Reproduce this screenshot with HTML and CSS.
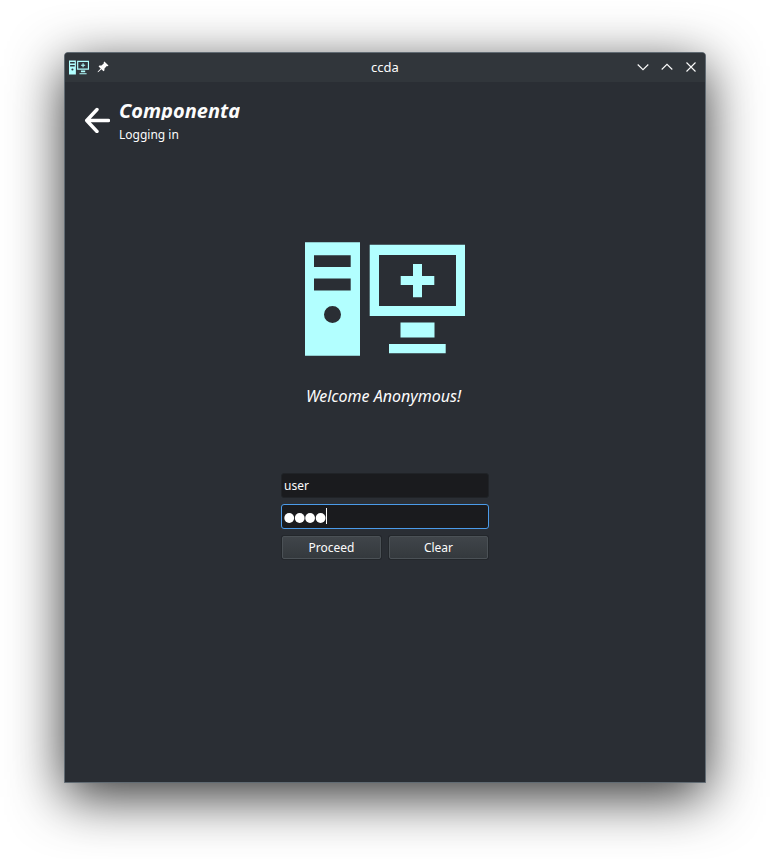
FILE: index.html
```html
<!DOCTYPE html>
<html lang="en">
<head>
<meta charset="utf-8">
<title>ccda</title>
<link rel="stylesheet" href="styles.css">
</head>
<body>
<svg class="defs" aria-hidden="true">
  <symbol id="logo" viewBox="0 0 160 114">
    <path fill="currentColor" fill-rule="evenodd" d="M0 .3H55V113.7H0ZM9 13.3V25H45.7V13.3ZM9 36.5V48.4H45.7V36.5ZM19 72.5a8.5 8.5 0 1 0 17 0a8.5 8.5 0 1 0-17 0ZM64.7 2.8H160V74H64.7ZM74 13V64H151V13ZM108 22h9v12h12.3v9H117v12.3h-9V43H95.700v-9H108ZM95.500 80.500h34v15H95.500ZM84 102h56.700v9.300H84Z"/>
  </symbol>
</svg>
<div class="window">
  <header class="titlebar">
    <div class="left">
      <svg class="app-icon"><use href="#logo"/></svg>
      <svg class="pin" viewBox="0 0 12 12"><path fill="#fcfcfc" d="M7.400 .4 11.500 4.500 10.600 5.200 9.800 5.100 7.500 7.500 7.400 9.500 6.500 10.300 4.400 8.200 1.400 11.100 .7 11.300 .8 10.500 3.700 7.500 1.600 5.400 2.400 4.600 4.500 4.500 6.900 2.200 6.700 1.200Z"/></svg>
    </div>
    <div class="title">ccda</div>
    <div class="controls">
      <svg viewBox="0 0 12 12"><path d="M.7 3.500 6 8.700 11.300 3.500"/></svg>
      <svg viewBox="0 0 12 12"><path d="M.7 8.500 6 3.300 11.300 8.500"/></svg>
      <svg viewBox="0 0 12 12"><path d="M1.500 1.500 10.500 10.500M10.500 1.500 1.500 10.500"/></svg>
    </div>
  </header>
  <div class="heading">
    <svg class="back" viewBox="0 0 26 26"><path d="M13 2.500 2.700 13.500 13 24.500M3 13.500H24.500"/></svg>
    <div>
      <h1>Componenta</h1>
      <p>Logging in</p>
    </div>
  </div>
  <main>
    <svg class="logo"><use href="#logo"/></svg>
    <p class="welcome">Welcome Anonymous!</p>
    <form class="login">
      <div class="field">user</div>
      <div class="field focused">
        <svg class="dots" viewBox="0 0 42 10"><circle cx="5.200" cy="5" r="4.900"/><circle cx="15.700" cy="5" r="4.900"/><circle cx="26.100" cy="5" r="4.900"/><circle cx="36.600" cy="5" r="4.900"/></svg>
        <i class="caret"></i>
      </div>
      <div class="actions">
        <button type="button">Proceed</button>
        <button type="button">Clear</button>
      </div>
    </form>
  </main>
</div>
</body>
</html>
```
FILE: styles.css
```css
* { box-sizing: border-box; }
body {
  margin: 0;
  height: 859px;
  padding: 52px 64px 0;
  overflow: hidden;
  background: #fff;
  color: #fcfcfc;
  font: 12px/17px "Noto Sans", sans-serif;
}
h1, p { margin: 0; }
svg { display: block; }
.defs { position: absolute; width: 0; height: 0; }
.window {
  width: 642px;
  height: 731px;
  border: 1px solid #616b73;
  border-radius: 4px 4px 0 0;
  background: #2a2e34;
  box-shadow: 0 14px 54px rgba(0, 0, 0, .8);
}
.titlebar {
  display: grid;
  grid-template-columns: 1fr auto 1fr;
  align-items: center;
  height: 29px;
  padding: 0 8px 0 4px;
  border-radius: 3px 3px 0 0;
  background: #31363b;
}
.left { display: flex; align-items: center; gap: 8px; }
.app-icon { width: 20px; height: 15px; margin-top: -1px; color: #b2ffff; }
.pin { width: 12px; height: 12px; margin-top: -2px; }
.title { font-size: 13px; padding-left: 4px; }
.controls { display: flex; justify-content: flex-end; gap: 12px; margin-top: -1px; }
.controls svg { width: 12px; height: 12px; fill: none; stroke: #fcfcfc; stroke-width: 1.1; }
.heading { display: flex; height: 160px; padding: 15px 0 0 19px; gap: 9px; }
.back { width: 26px; height: 26px; margin-top: 10px; fill: none; stroke: #fff; stroke-width: 3.400; stroke-linecap: round; stroke-linejoin: round; }
h1 { height: 23px; overflow: hidden; font-size: 20px; line-height: 27px; font-style: italic; font-weight: 700; }
.heading p { margin-top: 6px; }
main { display: flex; flex-direction: column; align-items: center; }
.logo { width: 160px; height: 114px; color: #b2ffff; }
.welcome { margin-top: 28px; padding-right: 3px; font-size: 16px; line-height: 24px; font-style: italic; }
.login { display: flex; flex-direction: column; gap: 6px; width: 208px; margin-top: 65px; }
.field {
  display: flex;
  align-items: center;
  height: 25px;
  padding: 0 2px;
  border: 1px solid #202327;
  border-radius: 3px;
  background: #1a1b1e;
}
.focused { border-color: #4b9be9; }
.dots { width: 42px; height: 10px; margin-top: 2px; fill: #fff; }
.caret { width: 1px; height: 16px; margin-top: -2px; background: #fff; }
.actions { display: grid; grid-template-columns: 1fr 1fr; gap: 8px; padding: 1px; }
button {
  height: 23px;
  padding: 0;
  border: 1px solid #4b5156;
  border-radius: 2px;
  box-shadow: 0 0 0 1px #23272b;
  background: linear-gradient(#40454a, #34393d);
  color: #fcfcfc;
  font: inherit;
}
```
